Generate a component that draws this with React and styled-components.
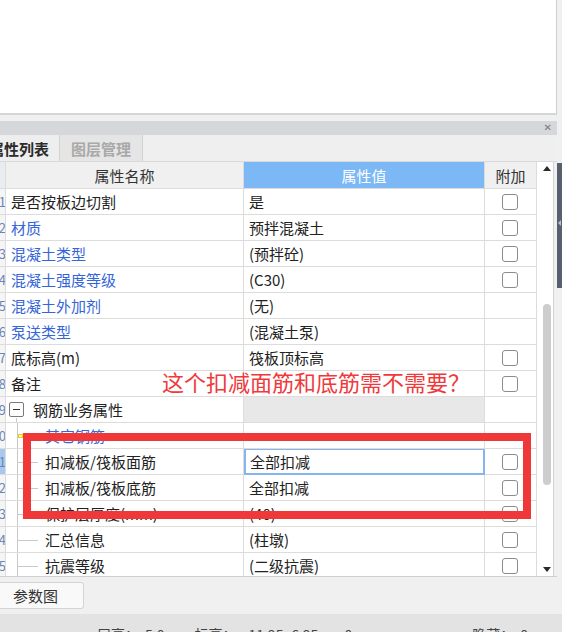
import React from "react";
import styled, { createGlobalStyle, css } from "styled-components";

const GlobalStyle = createGlobalStyle`
  html, body { margin: 0; padding: 0; }
  body {
    background: #f0f0f0;
    font-family: "Noto Sans CJK SC", "Microsoft YaHei", sans-serif;
    overflow: hidden;
  }
  * { box-sizing: border-box; }
`;

const Page = styled.div`
  width: 562px;
  height: 632px;
  display: flex;
  flex-direction: column;
  overflow: hidden;
  background: #f0f0f0;
`;

const Upper = styled.div`
  display: flex;
  height: 614px;
  flex: none;
`;

const MainCol = styled.div`
  width: 557px;
  display: flex;
  flex-direction: column;
`;

const TopPanel = styled.div`
  height: 115px;
  background: #fff;
  border-right: 1px solid #cfcfcf;
  border-bottom: 2px solid #d6d6d6;
`;

const Spacer = styled.div`
  height: 6px;
`;

const TitleBar = styled.div`
  height: 14px;
  background: #d5d7db;
  display: flex;
  justify-content: flex-end;
  align-items: center;
  padding-right: 5px;
  font-family: "DejaVu Sans", sans-serif;
  font-size: 10px;
  color: #7a7a7a;
  line-height: 1;
`;

const TabBar = styled.div`
  height: 27px;
  background: #efefef;
  display: flex;
  border-bottom: 1px solid #d9d9d9;
  overflow: hidden;
`;

const Tab = styled.div`
  display: flex;
  align-items: center;
  padding: 0 ${(p) => (p.$active ? "10px" : "11px")};
  margin-left: ${(p) => (p.$active ? "-21px" : "0")};
  border-right: 1px solid #d2d2d2;
  font-size: 15px;
  font-weight: 700;
  color: ${(p) => (p.$active ? "#2b2b2b" : "#a9a9a9")};
  background: ${(p) => (p.$active ? "#eeeeee" : "#e5e5e5")};
`;

const TableArea = styled.div`
  position: relative;
  height: 415px;
  display: flex;
  border-bottom: 1px solid #d0d0d0;
  background: #fff;
`;

const Grid = styled.div`
  width: 537px;
  height: 414px;
  overflow: hidden;
  display: flex;
  flex-direction: column;
`;

const Row = styled.div`
  display: grid;
  grid-template-columns: 6px 238px 241px 52px;
  height: ${(p) => (p.$header ? "27px" : "26px")};
  flex: none;
`;

const Cell = styled.div`
  border-right: 1px solid #dcdcdc;
  border-bottom: 1px solid #dcdcdc;
  display: flex;
  align-items: center;
  font-size: 15px;
  color: #222;
  white-space: nowrap;
  overflow: hidden;
  position: relative;
`;

const NumCell = styled(Cell)`
  justify-content: flex-end;
  font-size: 13px;
  color: #6a86b8;
  background: ${(p) => (p.$selected ? "#a7c8ef" : p.$header ? "#e9edf3" : "#f5f5f5")};
  & > span { margin-right: -1px; flex: none; }
`;

const HeadCell = styled(Cell)`
  justify-content: center;
  background: ${(p) => (p.$blue ? "#7cb8f6" : "#f0f0f0")};
  color: ${(p) => (p.$blue ? "#ffffff" : "#333")};
`;

const NameCell = styled(Cell)`
  padding-left: ${(p) => (p.$child ? "0" : p.$group ? "3px" : "5px")};
  color: ${(p) => (p.$blue ? "#3465d9" : "#222")};
`;

const ValueCell = styled(Cell)`
  padding-left: 5px;
  background: ${(p) => (p.$group ? "#e8e8e8" : "#fff")};
  ${(p) =>
    p.$selected &&
    css`
      padding-left: 4px;
      border: 2px solid #84b5ef;
      border-top-width: 1px;
    `}
`;

const AddCell = styled(Cell)`
  justify-content: center;
`;

const CheckBox = styled.div`
  width: 16px;
  height: 16px;
  border: 1px solid #8c8c8c;
  border-radius: 3px;
  background: #fff;
  margin-left: -2px;
`;

const Indent = styled.div`
  width: 39px;
  height: 100%;
  flex: none;
  position: relative;
  &::before {
    content: "";
    position: absolute;
    left: 11px;
    top: 0;
    bottom: -1px;
    border-left: 1px solid #c9c9c9;
  }
  &::after {
    content: "";
    position: absolute;
    left: 12px;
    width: 20px;
    top: 50%;
    border-top: 1px solid #c9c9c9;
  }
`;

const Marker = styled.div`
  position: absolute;
  left: 12px;
  top: 11px;
  width: 5px;
  height: 4px;
  border: 1px solid #e6d200;
  background: #fffbd0;
  z-index: 1;
`;

const ExpandBox = styled.div`
  width: 15px;
  height: 15px;
  border: 1px solid #7a7a7a;
  border-radius: 2px;
  display: flex;
  align-items: center;
  justify-content: center;
  margin-right: 9px;
  position: relative;
  &::before {
    content: "";
    width: 7px;
    border-top: 1px solid #333;
  }
  &::after {
    content: "";
    position: absolute;
    left: 6px;
    top: 15px;
    height: 8px;
    border-left: 1px solid #c9c9c9;
  }
`;

const ScrollBar = styled.div`
  width: 17px;
  border-right: 1px solid #d2d2d2;
  background: #fff;
  display: flex;
  flex-direction: column;
  padding-left: 6px;
`;

const Arrow = styled.div`
  height: 16px;
  display: flex;
  align-items: center;
  flex: none;
  &::before {
    content: "";
    border-left: 4.5px solid transparent;
    border-right: 4.5px solid transparent;
    ${(p) =>
      p.$down
        ? css`border-top: 5px solid #2a2a2a;`
        : css`border-bottom: 5px solid #2a2a2a;`}
    margin-top: ${(p) => (p.$down ? "3px" : "-4px")};
  }
`;

const Track = styled.div`
  flex: 1;
`;

const Thumb = styled.div`
  margin-top: 126px;
  width: 8px;
  height: 181px;
  border-radius: 4px;
  background: #cdcdcd;
`;

const Filler = styled.div`
  flex: 1;
  background: #f0f0f0;
`;

const RedBox = styled.div`
  position: absolute;
  left: 23px;
  top: 271px;
  width: 508px;
  height: 86px;
  border: 8px solid #f03838;
  pointer-events: none;
`;

const RedNote = styled.div`
  position: absolute;
  left: 162px;
  top: 204px;
  font-size: 22px;
  line-height: 30px;
  color: #f0393b;
  white-space: nowrap;
`;

const BottomArea = styled.div`
  height: 37px;
  padding-top: 5px;
`;

const Button = styled.div`
  width: 88px;
  height: 27px;
  margin-left: -4px;
  border: 1px solid #d3d3d3;
  border-radius: 3px;
  background: #f9f9f9;
  display: flex;
  align-items: center;
  padding-left: 16px;
  font-size: 15px;
  color: #333;
`;

const RightStrip = styled.div`
  width: 5px;
  display: flex;
  flex-direction: column;
`;

const StripGap = styled.div`
  height: ${(p) => p.$h}px;
  flex: ${(p) => (p.$h ? "none" : "1")};
  background: #f0f0f0;
`;

const StripDark = styled.div`
  height: 125px;
  background: #56606e;
  display: flex;
  align-items: center;
  &::before {
    content: "";
    border-top: 3px solid transparent;
    border-bottom: 3px solid transparent;
    border-right: 3px solid #b9bec6;
    margin-top: -5px;
    margin-left: 1px;
  }
`;

const StatusBar = styled.div`
  height: 30px;
  flex: none;
  background: #e3e3e3;
  display: flex;
  align-items: flex-start;
  padding-top: 10px;
  font-size: 14px;
  line-height: 20px;
  color: #444;
  white-space: nowrap;
`;

const StatusItem = styled.span`
  margin-left: ${(p) => p.$ml}px;
`;

const rows = [
  { name: "是否按板边切割", value: "是", cb: true },
  { name: "材质", value: "预拌混凝土", cb: true, blue: true },
  { name: "混凝土类型", value: "(预拌砼)", cb: true, blue: true },
  { name: "混凝土强度等级", value: "(C30)", cb: true, blue: true },
  { name: "混凝土外加剂", value: "(无)", blue: true },
  { name: "泵送类型", value: "(混凝土泵)", blue: true },
  { name: "底标高(m)", value: "筏板顶标高", cb: true },
  { name: "备注", value: "", cb: true },
  { name: "钢筋业务属性", value: "", group: true },
  { name: "其它钢筋", value: "", child: true, blue: true, marker: true },
  { name: "扣减板/筏板面筋", value: "全部扣减", cb: true, child: true, selected: true },
  { name: "扣减板/筏板底筋", value: "全部扣减", cb: true, child: true },
  { name: "保护层厚度(mm)", value: "(40)", cb: true, child: true },
  { name: "汇总信息", value: "(柱墩)", cb: true, child: true },
  { name: "抗震等级", value: "(二级抗震)", cb: true, child: true },
];

export default function App() {
  return (
    <Page>
      <GlobalStyle />
      <Upper>
        <MainCol>
          <TopPanel />
          <Spacer />
          <TitleBar>✕</TitleBar>
          <TabBar>
            <Tab $active>属性列表</Tab>
            <Tab>图层管理</Tab>
          </TabBar>
          <TableArea>
            <Grid>
              <Row $header>
                <NumCell $header />
                <HeadCell>属性名称</HeadCell>
                <HeadCell $blue>属性值</HeadCell>
                <HeadCell>附加</HeadCell>
              </Row>
              {rows.map((r, i) => (
                <Row key={i}>
                  <NumCell $selected={r.selected}>
                    <span>{i + 1}</span>
                  </NumCell>
                  <NameCell $child={r.child} $group={r.group} $blue={r.blue}>
                    {r.group && <ExpandBox />}
                    {r.child && <Indent />}
                    {r.marker && <Marker />}
                    {r.name}
                  </NameCell>
                  <ValueCell $group={r.group} $selected={r.selected}>
                    {r.value}
                  </ValueCell>
                  <AddCell>{r.cb && <CheckBox />}</AddCell>
                </Row>
              ))}
            </Grid>
            <ScrollBar>
              <Arrow />
              <Track>
                <Thumb />
              </Track>
              <Arrow $down />
            </ScrollBar>
            <Filler />
            <RedNote>这个扣减面筋和底筋需不需要？</RedNote>
            <RedBox />
          </TableArea>
          <BottomArea>
            <Button>参数图</Button>
          </BottomArea>
        </MainCol>
        <RightStrip>
          <StripGap $h={163} />
          <StripDark />
          <StripGap />
        </RightStrip>
      </Upper>
      <StatusBar>
        <StatusItem $ml={97}>层高：</StatusItem>
        <StatusItem $ml={6}>5.0</StatusItem>
        <StatusItem $ml={30}>标高：</StatusItem>
        <StatusItem $ml={12}>11.95~6.95</StatusItem>
        <StatusItem $ml={26}>0</StatusItem>
        <StatusItem $ml={120}>隐藏：</StatusItem>
        <StatusItem $ml={6}>0</StatusItem>
      </StatusBar>
    </Page>
  );
}
